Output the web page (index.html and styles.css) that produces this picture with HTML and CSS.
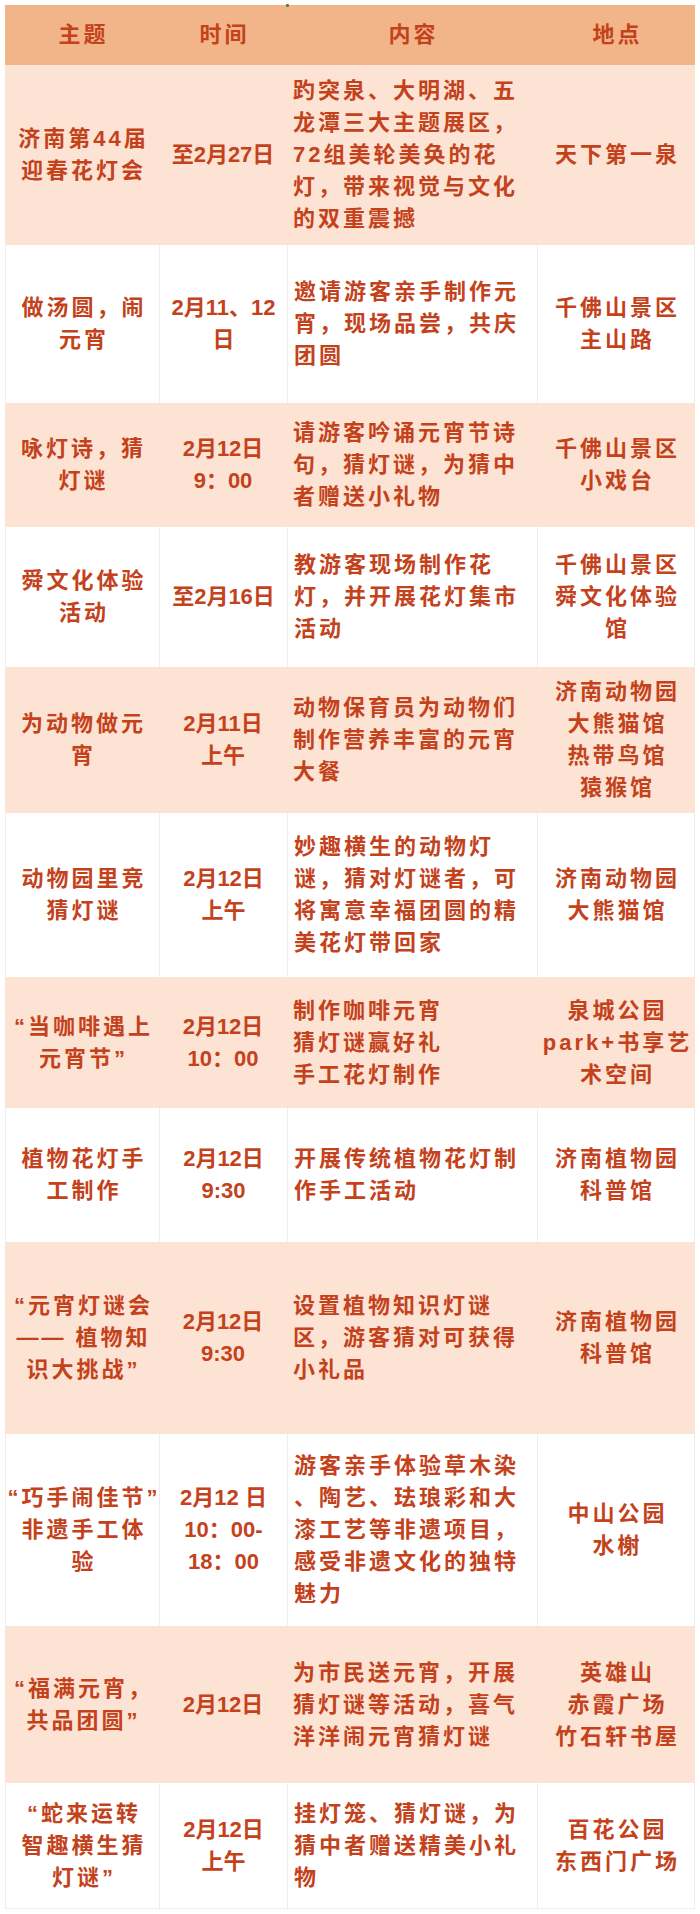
FILE: index.html
```html
<!DOCTYPE html>
<html lang="zh-CN">
<head>
<meta charset="utf-8">
<title>元宵活动</title>
<link rel="stylesheet" href="styles.css">
</head>
<body>
<div class="page">
  <span class="mark"></span>
  <div class="table">
    <div class="row head">
      <div class="cell c1">主题</div>
      <div class="cell c2">时间</div>
      <div class="cell c3 center">内容</div>
      <div class="cell c4">地点</div>
    </div>
    <div class="row peach h180">
      <div class="cell c1">济南第44届<br>迎春花灯会</div>
      <div class="cell c2">至2月27日</div>
      <div class="cell c3">趵突泉、大明湖、五<br>龙潭三大主题展区，<br>72组美轮美奂的花<br>灯，带来视觉与文化<br>的双重震撼</div>
      <div class="cell c4">天下第一泉</div>
    </div>
    <div class="row white h158">
      <div class="cell c1">做汤圆，闹<br>元宵</div>
      <div class="cell c2">2月11、12<br>日</div>
      <div class="cell c3">邀请游客亲手制作元<br>宵，现场品尝，共庆<br>团圆</div>
      <div class="cell c4">千佛山景区<br>主山路</div>
    </div>
    <div class="row peach h124">
      <div class="cell c1">咏灯诗，猜<br>灯谜</div>
      <div class="cell c2">2月12日<br>9：00</div>
      <div class="cell c3">请游客吟诵元宵节诗<br>句，猜灯谜，为猜中<br>者赠送小礼物</div>
      <div class="cell c4">千佛山景区<br>小戏台</div>
    </div>
    <div class="row white h140">
      <div class="cell c1">舜文化体验<br>活动</div>
      <div class="cell c2">至2月16日</div>
      <div class="cell c3">教游客现场制作花<br>灯，并开展花灯集市<br>活动</div>
      <div class="cell c4">千佛山景区<br>舜文化体验<br>馆</div>
    </div>
    <div class="row peach h146">
      <div class="cell c1">为动物做元<br>宵</div>
      <div class="cell c2">2月11日<br>上午</div>
      <div class="cell c3">动物保育员为动物们<br>制作营养丰富的元宵<br>大餐</div>
      <div class="cell c4">济南动物园<br>大熊猫馆<br>热带鸟馆<br>猿猴馆</div>
    </div>
    <div class="row white h164">
      <div class="cell c1">动物园里竞<br>猜灯谜</div>
      <div class="cell c2">2月12日<br>上午</div>
      <div class="cell c3">妙趣横生的动物灯<br>谜，猜对灯谜者，可<br>将寓意幸福团圆的精<br>美花灯带回家</div>
      <div class="cell c4">济南动物园<br>大熊猫馆</div>
    </div>
    <div class="row peach h131">
      <div class="cell c1">“当咖啡遇上<br>元宵节”</div>
      <div class="cell c2">2月12日<br>10：00</div>
      <div class="cell c3">制作咖啡元宵<br>猜灯谜赢好礼<br>手工花灯制作</div>
      <div class="cell c4">泉城公园<br>park+书享艺<br>术空间</div>
    </div>
    <div class="row white h134">
      <div class="cell c1">植物花灯手<br>工制作</div>
      <div class="cell c2">2月12日<br>9:30</div>
      <div class="cell c3">开展传统植物花灯制<br>作手工活动</div>
      <div class="cell c4">济南植物园<br>科普馆</div>
    </div>
    <div class="row peach h192">
      <div class="cell c1">“元宵灯谜会<br>—— 植物知<br>识大挑战”</div>
      <div class="cell c2">2月12日<br>9:30</div>
      <div class="cell c3">设置植物知识灯谜<br>区，游客猜对可获得<br>小礼品</div>
      <div class="cell c4">济南植物园<br>科普馆</div>
    </div>
    <div class="row white h192">
      <div class="cell c1">“巧手闹佳节”<br>非遗手工体<br>验</div>
      <div class="cell c2">2月12 日<br>10：00-<br>18：00</div>
      <div class="cell c3">游客亲手体验草木染<br>、陶艺、珐琅彩和大<br>漆工艺等非遗项目，<br>感受非遗文化的独特<br>魅力</div>
      <div class="cell c4">中山公园<br>水榭</div>
    </div>
    <div class="row peach h157">
      <div class="cell c1">“福满元宵，<br>共品团圆”</div>
      <div class="cell c2">2月12日</div>
      <div class="cell c3">为市民送元宵，开展<br>猜灯谜等活动，喜气<br>洋洋闹元宵猜灯谜</div>
      <div class="cell c4">英雄山<br>赤霞广场<br>竹石轩书屋</div>
    </div>
    <div class="row white h125 last">
      <div class="cell c1">“蛇来运转<br>智趣横生猜<br>灯谜”</div>
      <div class="cell c2">2月12日<br>上午</div>
      <div class="cell c3">挂灯笼、猜灯谜，为<br>猜中者赠送精美小礼<br>物</div>
      <div class="cell c4">百花公园<br>东西门广场</div>
    </div>
  </div>
</div>
</body>
</html>
```
FILE: styles.css
```css
html, body {
  margin: 0;
  padding: 0;
  background: #ffffff;
}

.page {
  position: relative;
  padding: 5px 5px 6px 5px;
  font-family: "Liberation Sans", "Noto Sans CJK SC", sans-serif;
  color: #c4421b;
  font-size: 22px;
  line-height: 32px;
  font-weight: 700;
}

.mark {
  position: absolute;
  left: 286px;
  top: 4px;
  width: 3px;
  height: 3px;
  background: #3f8a2a;
  border-radius: 1px;
}

.table {
  display: flex;
  flex-direction: column;
  width: 690px;
}

.row {
  display: grid;
  grid-template-columns: 154px 128px 250px 158px;
}

.cell {
  box-sizing: border-box;
  display: flex;
  align-items: center;
  justify-content: center;
  text-align: center;
  white-space: nowrap;
  letter-spacing: 3px;
  padding-left: 3px;
}

.c2 {
  letter-spacing: 0;
  padding-left: 0;
}

.c3 {
  justify-content: flex-start;
  text-align: left;
  padding-left: 6px;
}

.c3.center {
  justify-content: center;
  text-align: center;
}

.head {
  height: 60px;
  background: #f2b589;
}

.head .cell {
  letter-spacing: 3px;
  padding-left: 3px;
}

.peach {
  background: #fde3d4;
}

.white {
  background: #ffffff;
}

.white .cell {
  border-left: 1px solid #ededed;
}

.white .c4 {
  border-right: 1px solid #ededed;
}

.last {
  border-bottom: 1px solid #ededed;
}

.h124 { height: 124px; }
.h125 { height: 125px; }
.h131 { height: 131px; }
.h134 { height: 134px; }
.h140 { height: 140px; }
.h146 { height: 146px; }
.h157 { height: 157px; }
.h158 { height: 158px; }
.h164 { height: 164px; }
.h180 { height: 180px; }
.h192 { height: 192px; }
```
